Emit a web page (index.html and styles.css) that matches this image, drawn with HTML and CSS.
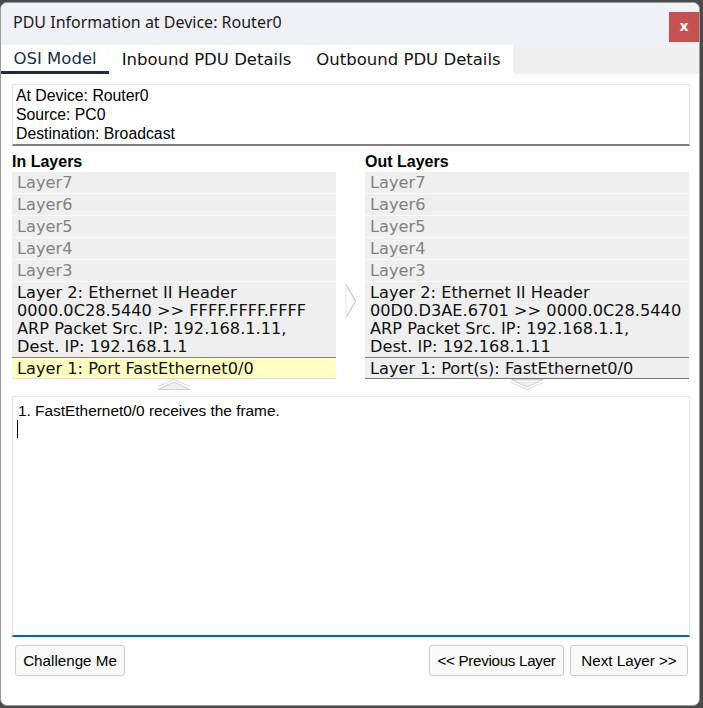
FILE: index.html
```html
<!DOCTYPE html>
<html>
<head>
<meta charset="utf-8">
<link rel="stylesheet" href="styles.css">
</head>
<body>
<div class="dialog">
  <div class="titlebar">
    <div class="title">PDU Information at Device: Router0</div>
    <div class="close">x</div>
  </div>
  <div class="tabbar">
    <div class="tabs">
      <div class="tab active">OSI Model</div>
      <div class="tab">Inbound PDU Details</div>
      <div class="tab">Outbound PDU Details</div>
    </div>
  </div>
  <div class="content">
    <div class="info">
      <div>At Device: Router0</div>
      <div>Source: PC0</div>
      <div>Destination: Broadcast</div>
    </div>
    <div class="columns">
      <div class="col">
        <div class="col-title">In Layers</div>
        <div class="panel">
          <div class="row dim">Layer7</div>
          <div class="row dim">Layer6</div>
          <div class="row dim">Layer5</div>
          <div class="row dim">Layer4</div>
          <div class="row dim">Layer3</div>
          <div class="block">Layer 2: Ethernet II Header<br>0000.0C28.5440 &gt;&gt; FFFF.FFFF.FFFF<br>ARP Packet Src. IP: 192.168.1.11,<br>Dest. IP: 192.168.1.1</div>
          <div class="row l1 selected">Layer 1: Port FastEthernet0/0</div>
        </div>
        <div class="arrowrow">
          <svg class="vchev" width="34" height="11" viewBox="0 0 34 11"><polygon points="1,10.5 17,3 33,10.5" fill="#eeeeee" stroke="#d0d0d0" stroke-width="1"/><polyline points="1,7.5 17,0.5 33,7.5" fill="none" stroke="#dcdcdc" stroke-width="1"/></svg>
        </div>
      </div>
      <div class="mid">
        <svg width="12" height="34" viewBox="0 0 12 34"><polyline points="1,0.5 10.5,17 1,33.5" fill="none" stroke="#c8c8c8" stroke-width="1.2"/><polyline points="1,0.5 1,33.5" fill="none" stroke="#e6e6e6" stroke-width="1"/></svg>
      </div>
      <div class="col">
        <div class="col-title">Out Layers</div>
        <div class="panel outpanel">
          <div class="row dim">Layer7</div>
          <div class="row dim">Layer6</div>
          <div class="row dim">Layer5</div>
          <div class="row dim">Layer4</div>
          <div class="row dim">Layer3</div>
          <div class="block">Layer 2: Ethernet II Header<br>00D0.D3AE.6701 &gt;&gt; 0000.0C28.5440<br>ARP Packet Src. IP: 192.168.1.1,<br>Dest. IP: 192.168.1.11</div>
          <div class="row l1 out">Layer 1: Port(s): FastEthernet0/0</div>
        </div>
        <div class="arrowrow">
          <svg class="vchev" width="34" height="11" viewBox="0 0 34 11"><polygon points="1,0.5 17,8 33,0.5" fill="#eeeeee" stroke="#d0d0d0" stroke-width="1"/><polyline points="1,3.5 17,10.5 33,3.5" fill="none" stroke="#dcdcdc" stroke-width="1"/></svg>
        </div>
      </div>
    </div>
    <div class="desc">
      <div class="desc-text">1. FastEthernet0/0 receives the frame.</div>
      <div class="caret"></div>
    </div>
    <div class="buttons">
      <button class="btn btn-challenge">Challenge Me</button>
      <div class="spacer"></div>
      <button class="btn btn-prev">&lt;&lt; Previous Layer</button>
      <button class="btn btn-next">Next Layer &gt;&gt;</button>
    </div>
  </div>
</div>
</body>
</html>
```
FILE: styles.css
```css
html, body {
  margin: 0;
  padding: 0;
}
body {
  width: 703px;
  height: 708px;
  background: #4a4a4a;
  overflow: hidden;
}
.dialog {
  margin: 2px 2px 0 0;
  width: 700px;
  height: 704px;
  background: #ffffff;
  border: 1px solid #9a9a9a;
  border-radius: 7px;
  box-sizing: border-box;
  overflow: hidden;
  display: flex;
  flex-direction: column;
}
.titlebar {
  height: 42px;
  background: #f0f0f7;
  display: flex;
  justify-content: space-between;
  align-items: flex-start;
  flex-shrink: 0;
}
.title {
  font-family: "Noto Sans", "Open Sans", sans-serif;
  font-size: 16px;
  color: #1a1a1a;
  padding: 8px 0 0 12px;
  line-height: 22px;
}
.close {
  width: 30px;
  height: 30px;
  margin-top: 9px;
  margin-right: 0;
  background: #c75050;
  color: #ffffff;
  font-family: "DejaVu Sans", sans-serif;
  font-weight: bold;
  font-size: 14px;
  line-height: 28px;
  text-align: center;
}
.tabbar {
  height: 29px;
  background: #f0f0f0;
  display: flex;
  flex-shrink: 0;
}
.tabs {
  display: flex;
  background: #ffffff;
}
.tab {
  font-family: "DejaVu Sans", Verdana, sans-serif;
  font-size: 16.5px;
  color: #111111;
  padding: 1px 12.5px 0;
  line-height: 28px;
  height: 29px;
  box-sizing: border-box;
}
.tab.active {
  border-bottom: 3px solid #1b2c4c;
  line-height: 25px;
  color: #1b2c4c;
}
.content {
  padding: 10px 9px 0 11px;
  display: flex;
  flex-direction: column;
}
.info {
  height: 62px;
  box-sizing: border-box;
  border: 1px solid #e2e2e2;
  border-bottom: 2px solid #808080;
  padding: 1px 3px 0;
  font-family: "Liberation Sans", Arial, sans-serif;
  font-size: 15.8px;
  line-height: 19px;
  color: #000000;
}
.columns {
  display: flex;
  margin-top: 6px;
}
.col {
  width: 324px;
  display: flex;
  flex-direction: column;
}
.col-title {
  font-family: "Liberation Sans", Arial, sans-serif;
  font-weight: bold;
  font-size: 16px;
  line-height: 20px;
  height: 20px;
  color: #000;
}
.mid {
  width: 29px;
  display: flex;
  justify-content: center;
  padding-top: 132px;
  box-sizing: border-box;
}
.panel {
  background: #efefef;
  font-family: "DejaVu Sans", Verdana, sans-serif;
  font-size: 16.2px;
  color: #111;
}
.row {
  height: 22px;
  line-height: 22px;
  padding-left: 5px;
  box-sizing: border-box;
  border-bottom: 1px solid #f9f9f9;
  white-space: nowrap;
}
.row.dim {
  color: #828282;
}
.block {
  padding: 2px 5px 2px;
  line-height: 18px;
  height: 75px;
  box-sizing: border-box;
  white-space: nowrap;
}
.row.l1 {
  border-top: 1px solid #808080;
  border-bottom: none;
  height: 22px;
  line-height: 21px;
}
.row.selected {
  background: #ffffc2;
  border-bottom: 1px solid #e0e0e0;
}
.row.out {
  border-bottom: 1px solid #7a7a7a;
}
.arrowrow {
  height: 11px;
  display: flex;
  justify-content: center;
}
.vchev {
  display: block;
}
.desc {
  margin-top: 6px;
  height: 241px;
  box-sizing: border-box;
  border: 1px solid #e3e3e3;
  border-bottom: 2px solid #0067c0;
  padding: 5px 5px 0 5px;
}
.desc-text {
  font-family: "Liberation Sans", Arial, sans-serif;
  font-size: 15.4px;
  line-height: 17px;
  color: #000;
}
.caret {
  width: 1px;
  height: 18px;
  background: #000;
  margin-top: 1px;
  margin-left: -1px;
}
.buttons {
  display: flex;
  margin-top: 8px;
  padding: 0 2px 0 3px;
  gap: 6px;
}
.spacer {
  flex: 1;
}
.btn {
  height: 31px;
  padding: 0;
  background: #fafafa;
  border: 1px solid #cccccc;
  border-radius: 3px;
  font-family: "Liberation Sans", Arial, sans-serif;
  font-size: 15.2px;
  color: #000;
  box-sizing: border-box;
  text-align: center;
}
.btn-challenge {
  width: 110px;
}
.btn-prev {
  width: 135px;
  letter-spacing: -0.3px;
}
.btn-next {
  width: 118px;
}
```
